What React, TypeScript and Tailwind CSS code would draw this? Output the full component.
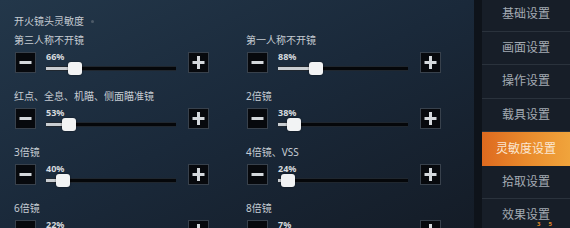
import React from "react";

const rows = [
  [
    { label: "第三人称不开镜", value: 66 },
    { label: "第一人称不开镜", value: 88 },
  ],
  [
    { label: "红点、全息、机瞄、侧面瞄准镜", value: 53 },
    { label: "2倍镜", value: 38 },
  ],
  [
    { label: "3倍镜", value: 40 },
    { label: "4倍镜、VSS", value: 24 },
  ],
  [
    { label: "6倍镜", value: 22 },
    { label: "8倍镜", value: 7 },
  ],
];

const menu = ["基础设置", "画面设置", "操作设置", "载具设置", "灵敏度设置", "拾取设置", "效果设置"];

function StepButton({ plus }: { plus?: boolean }) {
  return (
    <button className="w-[21px] h-[21px] shrink-0 flex items-center justify-center bg-[#07090d] border border-[#38414c]">
      <svg width="15" height="15" viewBox="0 0 15 15">
        <rect x="1.5" y="6" width="12" height="3" fill="#d4d8dc" />
        {plus && <rect x="6" y="1" width="3" height="13" fill="#d4d8dc" />}
      </svg>
    </button>
  );
}

function Slider({ label, value }: { label: string; value: number }) {
  const pos = (value / 300) * 100;
  return (
    <div className="h-[56px] flex flex-col">
      <div className="h-[19px] text-[10px] leading-[14px] text-[#c6ccd3] -ml-px">{label}</div>
      <div className="flex items-start h-[21px]">
        <StepButton />
        <div className="relative ml-[10px] w-[130px] h-[21px]">
          <div className="absolute left-0 top-0 text-[9px] leading-[10px] font-bold text-[#d6dade]">
            {value}%
          </div>
          <div className="absolute left-0 right-0 top-[14px] h-[5px] bg-[#05070a] border-y border-[#20272f]">
            <div className="h-full bg-[#c9cdd1]" style={{ width: `${pos}%` }} />
          </div>
          <div
            className="absolute top-[10px] w-[14px] h-[13px] -ml-[7px] rounded-[3px] bg-[#f2f3f4] shadow-[0_0_2px_rgba(0,0,0,0.6)]"
            style={{ left: `${pos}%` }}
          />
        </div>
        <div className="ml-[12px]">
          <StepButton plus />
        </div>
      </div>
    </div>
  );
}

export default function App() {
  return (
    <div
      className="w-[570px] h-[228px] flex overflow-hidden bg-[#0e131a]"
      style={{ fontFamily: '"Noto Sans", "Noto Sans CJK SC", sans-serif' }}
    >
      <main className="w-[474px] shrink-0 flex flex-col pl-[15px] pt-[9px] bg-gradient-to-br from-[#23374a] via-[#1a293a] to-[#141c27]">
        <div className="h-[24px] shrink-0 flex items-center text-[10px] text-[#c6ccd3] -ml-px">
          开火镜头灵敏度
          <span className="ml-[7px] w-[3px] h-[3px] rounded-full bg-[#4d5b68]" />
        </div>
        <div className="shrink-0 grid grid-cols-[194px_194px] gap-x-[38px]">
          {rows.map((row) =>
            row.map((item) => <Slider key={item.label} label={item.label} value={item.value} />)
          )}
        </div>
      </main>
      <aside className="ml-[8px] flex-1 bg-[#171e28] flex flex-col -mt-[2px] relative">
        {menu.map((name) => {
          const active = name === "灵敏度设置";
          return (
            <div
              key={name}
              className={
                active
                  ? "h-[33.5px] shrink-0 flex items-center justify-center text-[12px] text-[#fbe7d2] bg-gradient-to-r from-[#de6a1f] via-[#e98a2c] to-[#f0a43c]"
                  : "h-[33.5px] shrink-0 flex items-center justify-center text-[12px] text-[#a4abb3] border-b border-[#2a323c]"
              }
            >
              {name}
            </div>
          );
        })}
        <div className="absolute left-[55px] bottom-[1px] flex gap-[8px] text-[6px] leading-[6px] font-bold text-[#e08a2a]">
          <span>3</span>
          <span>5</span>
        </div>
      </aside>
    </div>
  );
}
